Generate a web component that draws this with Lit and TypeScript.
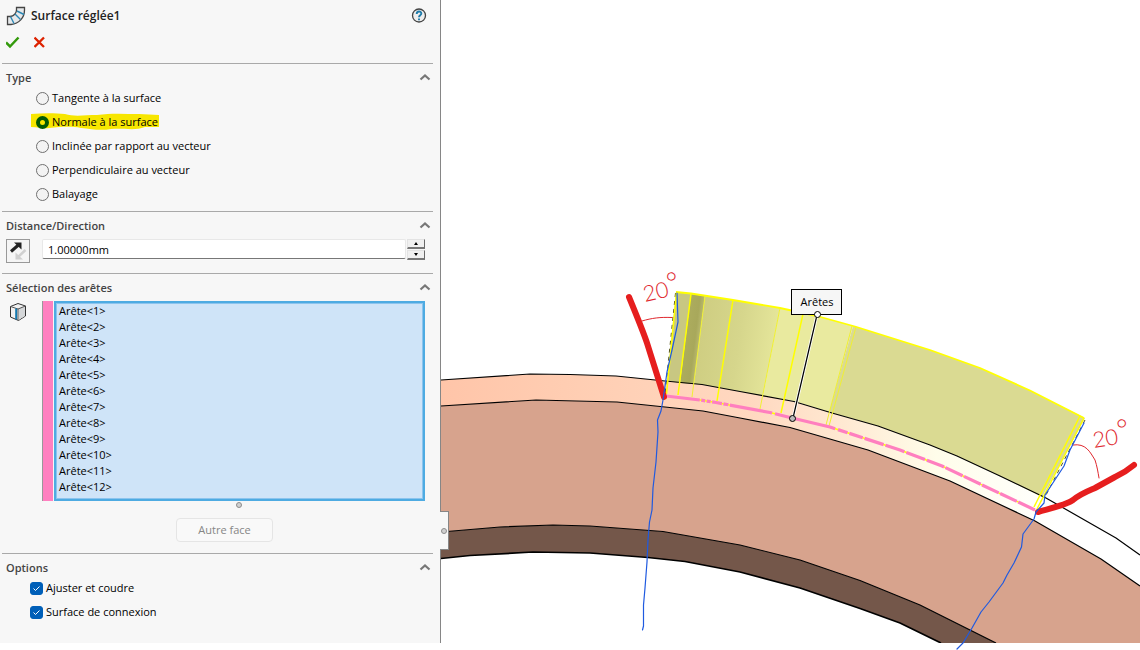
import { LitElement, html, svg, css } from "lit";
import { customElement, state } from "lit/decorators.js";

const TYPES = [
  "Tangente à la surface",
  "Normale à la surface",
  "Inclinée par rapport au vecteur",
  "Perpendiculaire au vecteur",
  "Balayage",
];
const OPTIONS = ["Ajuster et coudre", "Surface de connexion"];
const EDGES = Array.from({ length: 12 }, (_, i) => `Arête<${i + 1}>`);

const OUTER = "441,380 530,374 570,374.5 616,376 665,381 702,384.5 740,391.5 794,401.5 832,413 878,426 930,445 957,456 1000,476 1046,498 1116,538 1140,555";
const OUTER_BACK = "1140,586 1101,559 1035,521 950,481 868,450 790,427.5 740,418 703,411 665,407 617,402 536,400 441,406";
const BODY_BACK = "996,643 920,605 860,580.5 800,560 740,545 663,531.5 590,526 553,525 500,527 441,532";
const INNER = "441,558.5 470,555.5 533,552 590,553 648,557.5 685,561.5 740,572 800,588 860,608.5 900,623 941,643";
const EDGE_LINE = "666,396 700,400 716,402.5 770,412.5 792,418 830,427 900,450 942,466 1035,510";
const SHEET_LINES = [
  [691, 294, 678, 395, 1.5],
  [705, 296, 692, 397, 1],
  [733, 300, 717, 401, 1.5],
  [780, 308, 760, 409, 1],
  [803, 314, 781, 413, 1.5],
  [852, 326, 826, 425, 1],
  [856, 327, 829, 426, 1],
  [1080, 416, 1034, 507, 1.5],
  [1084, 418, 1037, 509, 1.5],
];

@customElement("model-view")
class ModelView extends LitElement {
  static styles = css`
    :host { display: block; min-width: 0; }
    .scene { display: block; width: 100%; height: auto; }
    .label { font: 11px "Open Sans", sans-serif; fill: #000; }
    .angle { font: 300 22px Lato, sans-serif; fill: #e0282e; }
    .degree { font-size: 28px; }
  `;

  render() {
    return html`<svg class="scene" viewBox="441 0 699 650" role="img" aria-label="Arêtes">
      <defs>
        <linearGradient id="rim" gradientUnits="userSpaceOnUse" x1="441" y1="0" x2="1060" y2="0">
          <stop offset="0" stop-color="#ffc5a9" /><stop offset=".2" stop-color="#ffcdb2" />
          <stop offset=".5" stop-color="#ffd8c0" /><stop offset=".65" stop-color="#ffe9d2" />
          <stop offset=".8" stop-color="#fffdea" /><stop offset="1" stop-color="#ffffff" />
        </linearGradient>
        <linearGradient id="fold" gradientUnits="userSpaceOnUse" x1="700" y1="340" x2="785" y2="352">
          <stop offset="0" stop-color="#cfce82" /><stop offset=".45" stop-color="#d6d68c" /><stop offset="1" stop-color="#e9ea9e" />
        </linearGradient>
        <linearGradient id="dark" gradientUnits="userSpaceOnUse" x1="685" y1="340" x2="701" y2="342">
          <stop offset="0" stop-color="#acac5e" /><stop offset=".6" stop-color="#a8a85b" /><stop offset="1" stop-color="#bfbf75" />
        </linearGradient>
        <clipPath id="frame"><rect x="441" y="0" width="699" height="643" /></clipPath>
      </defs>
      <g clip-path="url(#frame)" stroke-linejoin="round">
        <polygon points="${OUTER} ${OUTER_BACK}" fill="url(#rim)" />
        <polygon points="${OUTER_BACK} 441,532 500,527 553,525 590,526 663,531.5 740,545 800,560 860,580.5 920,605 996,643 1140,643" fill="#d7a38d" />
        <polygon points="${BODY_BACK} ${INNER}" fill="#74574a" />
        <g fill="none" stroke="#000" stroke-width="1.2">
          <polyline points=${OUTER_BACK} />
          <polyline points=${BODY_BACK} />
          <polyline points=${INNER} stroke-width="1.7" />
        </g>
        <polygon fill="#c8c782" points="676,292 691,294 680,383 667,381" />
        <polygon fill="url(#dark)" points="691,294 705,296 694,384 680,383" />
        <polygon fill="url(#fold)" points="705,296 733,300 780,308 763,396 740,391.5 702,384.5 694,384" />
        <polygon fill="#e9ea9f" points="780,308 817,316 853,326 829,412 794,401 763,396" />
        <polygon fill="#dada92" points="853,326 930,350 980,368 1030,390.5 1085,418 1042,497 1000,476 957,456 930,445 878,426 829,412" />
        <polyline points=${OUTER} fill="none" stroke="#000" stroke-width="1.2" />
        <polyline points="676,292 691,293.5 733,300 780,308 817,316 855,326.5 930,350 980,368 1030,390.5 1084,418" fill="none" stroke="#ff0" stroke-width="1.8" />
        <path d="M675.500 293L665 394M1085 420L1045 497" stroke="#55551a" stroke-dasharray="4 4" />
        <path d="M676.500 293L666.500 394" stroke="#ff0" stroke-width="1.500" />
        ${SHEET_LINES.map(([x1, y1, x2, y2, w]) => svg`<line x1=${x1} y1=${y1} x2=${x2} y2=${y2} stroke=${w > 1 ? "#ff0" : "#f0f032"} stroke-width=${w} />`)}
        <polyline points=${EDGE_LINE} fill="none" stroke="#ff0" stroke-width="1.500" />
        <polyline points=${EDGE_LINE} fill="none" stroke="#ff7fbf" stroke-width="3.200"
          stroke-dasharray="34 1.500 4 1.500 4 1.500 10 1.500 5 1.500 43 3 62 3 10 2 14 2 20 2 20 2 20 2 18.500 1.500 19 1.500 18.500 1.500 18.500 1.500 18.500 1.500 18.500 1.500 40" />
      </g>
      <g fill="none" stroke-linecap="round" stroke-linejoin="round">
        <path stroke="#e61e1e" stroke-width="6" d="M629 297C636 314 643 331 647 343L664 397M1038 512C1052 508 1066 505 1073 500C1080 494 1088 491 1095 488L1115 477C1124 473 1128 470 1134 465" />
        <path stroke="#e0282e" d="M642 321C652 318 660 317 672 317.500M1073 445C1086 443 1090 452 1095 460C1097 466 1098 472 1099 478" />
        <path stroke="#1f5ae0" stroke-width="1.200" d="M677 293L678 322L672 350L667 372L663 400L661 411L657.500 420L658 432L656 462L653 488L652 510L649.500 522L648 540L647 562L645 588L643.500 605L643.500 626L642.500 630M1084 423L1070 450L1064 466L1045 495L1044 503L1036 512L1034 519L1023 534L1021.500 547L1014 563L1007 575L1003 583L989 602L981 612L972 628L963 643L957 649" />
      </g>
      <text class="angle" transform="translate(645 302) rotate(-13)">20<tspan class="degree" dy="-3">°</tspan></text>
      <text class="angle" transform="translate(1094 448) rotate(-9)">20<tspan class="degree" dy="-4">°</tspan></text>
      <path d="M817 315L793 418" stroke="#fff" stroke-width="3" />
      <path d="M817 315L793 418" stroke="#000" stroke-width="1.200" />
      <rect x="791.500" y="289.500" width="50" height="25" fill="#f6f6f6" stroke="#000" />
      <text class="label" x="817" y="306" text-anchor="middle">Arêtes</text>
      <circle cx="817.500" cy="314.500" r="3" fill="#fff" stroke="#000" />
      <circle cx="792.500" cy="418.500" r="3" fill="#bbb" stroke="#000" />
    </svg>`;
  }
}

@customElement("app-root")
class AppRoot extends LitElement {
  @state() private type = 1;

  static styles = css`
    :host { display: block; background: #fff; color: #000; font: 11px/16px "Open Sans", sans-serif; }
    * { box-sizing: border-box; }
    button, input, select { font: inherit; color: inherit; margin: 0; }
    .app { display: grid; grid-template-columns: minmax(320px, 441px) minmax(0, 1fr); align-items: start; }
    .panel { position: relative; background: #f7f7f7; border-right: 1px solid #868686; padding: 0 7px 19px 2px; }
    .head { height: 63px; padding: 5px 6px 0 4px; }
    .titlebar { display: flex; align-items: center; gap: 5px; height: 21px; }
    .title { flex: 1; margin: 0; font-size: 12px; font-weight: 600; color: #222; }
    .icon-button { display: block; padding: 0; border: 0; background: none; line-height: 0; }
    .actions { display: flex; gap: 12px; padding-top: 8px; }
    .section { border-top: 1px solid #a9a9a9; padding-top: 6px; }
    .section-head { display: flex; justify-content: space-between; align-items: center; height: 16px; padding: 0 2px 0 4px; }
    .section-title { margin: 0; font-size: 11px; line-height: 16px; font-weight: 600; color: #444; }
    .rows { padding: 0 0 5px 34px; }
    .row { display: flex; align-items: center; width: fit-content; height: 24px; gap: 3px; position: relative; }
    .marker { position: absolute; left: -5px; top: 3px; }
    .radio { position: relative; appearance: none; width: 13px; height: 13px; border: 1px solid #707070; border-radius: 50%; background: #f3f3f3; }
    .radio:checked { border: 4px solid #035a03; background: #f7e600; }
    .row-text { position: relative; }
    .checks { padding-left: 28px; }
    .check { appearance: none; display: grid; width: 13px; height: 13px; border-radius: 3px; border: 1px solid #005fb8; background: #fff; }
    .check:checked { background: #005fb8 url("data:image/svg+xml,%3Csvg xmlns='http://www.w3.org/2000/svg' viewBox='0 0 11 11'%3E%3Cpath d='M2.500 5.500l2 2 4-4' fill='none' stroke='white'/%3E%3C/svg%3E"); }
    .distance { display: flex; align-items: start; gap: 12px; padding: 5px 8px 10px 4px; }
    .flip { display: grid; place-items: center; width: 24px; height: 24px; padding: 0; border: 1px solid #999; background: #f5f5f5; }
    .field { display: flex; flex: 1; gap: 1px; }
    .value { flex: 1; min-width: 0; height: 20px; padding: 0 5px; border: 1px solid #e8e8e8; border-bottom-color: #777; border-radius: 2px; background: #fff; outline: 0; }
    .spin { display: grid; gap: 1px; }
    .step { display: grid; place-items: center; width: 18px; height: 10px; padding: 0; background: #f0f0f0; border: 1px solid #e3e3e3; border-right: 1px solid #696969; border-bottom: 2px solid #777; }
    .selection { display: flex; gap: 12px; align-items: start; padding: 5px 8px 0 4px; }
    .edge-icon { width: 24px; }
    .list-wrap { display: flex; flex: 1; gap: 1px; min-width: 0; }
    .swatch { width: 11px; background: #ff80c0; border-left: 1px solid #999; }
    .list { flex: 1; min-width: 0; height: 200px; padding: 0; overflow: hidden; border: 2px solid #4eabe2; border-radius: 0; background: #cfe4f8; outline: 1px solid #8cc4ee; outline-offset: -3px; }
    .item { height: 16px; min-height: 16px; line-height: 16px; padding: 0 3px; }
    .grip { display: block; width: 6px; height: 6px; border: 1px solid #8c8c8c; border-radius: 50%; background: #d0d0d0; }
    .foot { display: grid; justify-items: center; gap: 10px; padding: 1px 0 11px; }
    .foot .grip { margin-left: 42px; }
    .other { width: 97px; height: 24px; margin-left: 14px; padding: 0; border: 1px solid #e5e5e5; border-radius: 4px; background: #f9f9f9; color: #868686; }
    .tab { position: absolute; right: -9px; top: 511px; display: grid; place-items: center; width: 9px; height: 39px; padding: 0; border: 1px solid #868686; border-left: 0; background: #f7f7f7; z-index: 1; }
  `;

  private head(title: string) {
    return html`<div class="section-head">
      <h2 class="section-title">${title}</h2>
      <button class="icon-button" aria-label=${title}>
        <svg width="12" height="8" viewBox="0 0 12 8"><path d="M1.500 5.500L6 1.500L10.500 5.500" fill="none" stroke="#777" stroke-width="2.200" /></svg>
      </button>
    </div>`;
  }

  render() {
    return html`<main class="app">
      <aside class="panel">
        <header class="head">
          <div class="titlebar">
            <svg width="20" height="20" viewBox="0 0 20 20" fill="none">
              <path d="M10.500 1.500H18.500V4C18.500 12 13 17.500 5 18.500H1.500V10.500H4C8 10 10.500 7 10.500 4Z" fill="#e6e8ea" stroke="#444" stroke-width="1.300" />
              <path d="M11 5L18 8.500M9 8L14.500 13.500M4.500 10.500L8 17.500" stroke="#2b86b3" stroke-width="1.400" />
            </svg>
            <h1 class="title">Surface réglée1</h1>
            <button class="icon-button" aria-label="Aide">
              <svg width="16" height="16" viewBox="0 0 16 16">
                <circle cx="8" cy="7.500" r="6.500" fill="#eee" stroke="#444" stroke-width="1.300" />
                <path d="M5.700 6C5.700 2.800 10.300 2.800 10.300 5.500C10.300 7.300 8 7.100 8 9.200M8 10.500V12.200" fill="none" stroke="#1f7cab" stroke-width="1.900" />
              </svg>
            </button>
          </div>
          <div class="actions">
            <button class="icon-button" aria-label="OK">
              <svg width="16" height="16" viewBox="0 0 16 16"><path d="M0 8.500L4 12.500L12.500 3.500" fill="none" stroke="#339a0c" stroke-width="2.500" /></svg>
            </button>
            <button class="icon-button" aria-label="Annuler">
              <svg width="12" height="16" viewBox="0 0 12 16"><path d="M0.500 3.500L10 13M10 3.500L0.500 13" fill="none" stroke="#dd2200" stroke-width="2.300" /></svg>
            </button>
          </div>
        </header>

        <section class="section">
          ${this.head("Type")}
          <div class="rows">
            ${TYPES.map((t, i) => html`<label class="row">
              ${i === 1 ? html`<svg class="marker" width="129" height="18" viewBox="0 0 129 18"><path d="M0 1C12 0 24 0 34 1C43 4 54 2 66 2C80 0 94 1 108 1L128 2V14H114C104 18 94 15 80 16C70 18 60 16 50 15C40 13 30 14 18 15C12 16 8 14 0 14Z" fill="#f7e600" /></svg>` : ""}
              <input class="radio" type="radio" name="type" .checked=${this.type === i} @change=${() => (this.type = i)} />
              <span class="row-text">${t}</span>
            </label>`)}
          </div>
        </section>

        <section class="section">
          ${this.head("Distance/Direction")}
          <div class="distance">
            <button class="flip" aria-label="Inverser la direction">
              <svg width="22" height="22" viewBox="0 0 22 22">
                <path d="M4 11.500L12 4.500" stroke="#222" stroke-width="3" />
                <path d="M7 2.500H14.500V9.500Z" fill="#222" />
                <path d="M18.500 10L11 17" stroke="#d0d0d0" stroke-width="2.500" />
                <path d="M8.500 12.500V19.500H16Z" fill="#d0d0d0" />
              </svg>
            </button>
            <div class="field">
              <input class="value" type="text" aria-label="Distance" value="1.00000mm" />
              <div class="spin">
                <button class="step" aria-label="Augmenter"><svg width="4" height="3" viewBox="0 0 4 3"><path d="M0 3L2 0L4 3Z" /></svg></button>
                <button class="step" aria-label="Diminuer"><svg width="4" height="3" viewBox="0 0 4 3"><path d="M0 0L2 3L4 0Z" /></svg></button>
              </div>
            </div>
          </div>
        </section>

        <section class="section">
          ${this.head("Sélection des arêtes")}
          <div class="selection">
            <svg class="edge-icon" height="22" viewBox="0 0 24 22">
              <path d="M4.500 5.500L12 2.500L19.500 5V15L12.500 19.500L4.500 16Z" fill="#f2f2f2" stroke="#333" stroke-linejoin="round" />
              <path d="M12 8L19 5.500V15L12.500 19Z" fill="#d5d7d9" />
              <path d="M4.500 5.500L12 8L19.500 5" fill="none" stroke="#555" />
              <path d="M10.200 7.500V18.500" stroke="#1479b0" stroke-width="2" />
              <path d="M12 8V19" stroke="#444" stroke-width=".8" />
            </svg>
            <div class="list-wrap">
              <div class="swatch"></div>
              <select class="list" size="12" aria-label="Sélection des arêtes">
                ${EDGES.map((e) => html`<option class="item">${e}</option>`)}
              </select>
            </div>
          </div>
          <div class="foot">
            <span class="grip"></span>
            <button class="other" disabled>Autre face</button>
          </div>
        </section>

        <section class="section">
          ${this.head("Options")}
          <div class="checks">
            ${OPTIONS.map((o) => html`<label class="row"><input class="check" type="checkbox" checked /><span class="row-text">${o}</span></label>`)}
          </div>
        </section>
        <button class="tab" aria-label="Réduire le panneau"><span class="grip"></span></button>
      </aside>
      <model-view></model-view>
    </main>`;
  }
}
